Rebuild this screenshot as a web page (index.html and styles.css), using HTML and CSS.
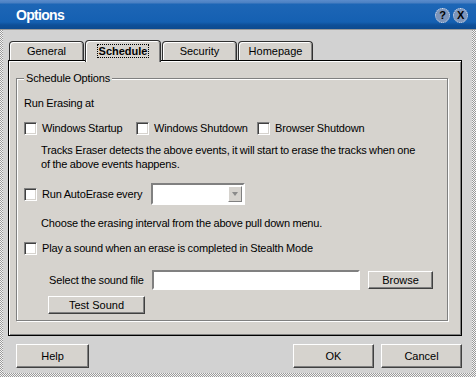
FILE: index.html
```html
<!DOCTYPE html>
<html lang="en">
<head>
    <meta charset="UTF-8">
    <title>Options</title>
    <link rel="stylesheet" href="styles.css">
</head>
<body>

    <div class="window">
        <!-- Title bar -->
        <div class="titlebar">
            <span class="title">Options</span>
            <span class="tb-buttons">
                <span class="tb-btn">?</span>
                <span class="tb-btn">X</span>
            </span>
        </div>

        <div class="dialog">
            <!-- Tabs -->
            <div class="tabs">
                <div class="tab">General</div>
                <div class="tab active"><span class="focus">Schedule</span></div>
                <div class="tab">Security</div>
                <div class="tab">Homepage</div>
            </div>

            <!-- Schedule page -->
            <div class="panel">
                <fieldset class="group">
                    <legend>Schedule Options</legend>

                    <div class="line first">Run Erasing at</div>

                    <div class="row checks">
                        <label class="check startup"><input type="checkbox"><span>Windows Startup</span></label>
                        <label class="check shutdown"><input type="checkbox"><span>Windows Shutdown</span></label>
                        <label class="check"><input type="checkbox"><span>Browser Shutdown</span></label>
                    </div>

                    <div class="desc">Tracks Eraser detects the above events, it will start to erase the tracks when one<br>of the above events happens.</div>

                    <div class="row auto">
                        <label class="check"><input type="checkbox"><span>Run AutoErase every</span></label>
                        <div class="combo"><span class="arrow"></span></div>
                    </div>

                    <div class="desc choose">Choose the erasing interval from the above pull down menu.</div>

                    <div class="row play">
                        <label class="check"><input type="checkbox"><span>Play a sound when an erase is completed in Stealth Mode</span></label>
                    </div>

                    <div class="row sound">
                        <span class="sound-label">Select the sound file</span>
                        <input type="text" class="field">
                        <button class="btn browse">Browse</button>
                    </div>

                    <button class="btn test">Test Sound</button>
                </fieldset>
            </div>

            <!-- Dialog buttons -->
            <div class="buttons">
                <button class="btn help">Help</button>
                <span class="spacer"></span>
                <button class="btn wide">OK</button>
                <button class="btn wide">Cancel</button>
            </div>
        </div>
    </div>

</body>
</html>
```

FILE: styles.css
```css
body {
    margin: 0;
    background-color: #2a6cc0;
    font-family: 'Liberation Sans', Arial, sans-serif;
    font-size: 11px;
    letter-spacing: -0.15px;
    word-spacing: -0.4px;
    color: #000;
}
.window {
    width: 476px;
    height: 377px;
    box-sizing: border-box;
    padding: 0 4px 4px 3px;
    background: repeating-conic-gradient(#f4f4f4 0 25%, #9a9a9a 0 50%) 0 0 / 2px 2px;
    display: flex;
    flex-direction: column;
}

/* Title bar */
.titlebar {
    flex-shrink: 0;
    height: 29px;
    margin: 0 -4px 0 -3px;
    padding: 0 8px 0 16px;
    display: flex;
    align-items: center;
    background: linear-gradient(#5a8ccc 0, #4a7fc2 3px, #1d66b6 4px, #1560b2 22px, #0e4f98 25px, #0c4a90 29px);
    border-bottom: 1px solid #9a9a9a;
}
.title {
    flex: 1;
    color: #fff;
    font-weight: bold;
    font-size: 14px;
    letter-spacing: -0.7px;
    padding-top: 1px;
}
.tb-buttons {
    display: flex;
    gap: 3px;
    padding-top: 1px;
}
.tb-btn {
    width: 13px;
    height: 13px;
    border-radius: 50%;
    border: 1px dotted #d8e4f4;
    background-color: #7d95bb;
    color: #000;
    font-weight: bold;
    font-size: 11px;
    line-height: 13px;
    text-align: center;
}

/* Dialog body */
.dialog {
    flex: 1;
    background-color: #d2d2d2;
    padding: 0 10px 0 5px;
    display: flex;
    flex-direction: column;
}
.tabs {
    flex-shrink: 0;
    display: flex;
    align-items: flex-end;
    gap: 1px;
    padding: 8px 0 0 1px;
    height: 22px;
    position: relative;
    z-index: 1;
}
.tab {
    width: 73px;
    height: 18px;
    border: 1px solid #303030;
    border-bottom: none;
    border-radius: 4px 4px 0 0;
    box-shadow: inset 1px 1px 0 #fff, inset -1px 0 0 #808080;
    background-color: #d6d3ce;
    text-align: center;
    line-height: 19px;
    letter-spacing: 0;
}
.tab.active {
    width: 74px;
    height: 21px;
    margin-bottom: -2px;
    font-weight: bold;
    line-height: 21px;
}
.focus {
    border: 1px dotted #000;
    padding: 0 1px;
}

.panel {
    flex-shrink: 0;
    height: 264px;
    border: 1px solid #000;
    box-shadow: inset 1px 1px 0 #fff, inset -1px -1px 0 #808080;
    background-color: #d6d3ce;
    padding: 10px 0 0 7px;
}

.group {
    width: 416px;
    margin: 0;
    padding: 0 7px 6px 7px;
    border: 1px solid #808080;
    box-shadow: inset 1px 1px 0 #fff, 1px 1px 0 #fff;
}
.group legend {
    padding: 0 2px;
    line-height: 14px;
    background-color: #d6d3ce;
}
.line, .desc {
    line-height: 14px;
}
.line.first {
    margin-top: 11px;
}
.desc {
    margin-top: 8px;
    padding-left: 17px;
}
.desc.choose {
    margin-top: 11px;
}

.row {
    display: flex;
    align-items: center;
    line-height: 14px;
}
.checks {
    margin-top: 11px;
}
.check.startup {
    width: 112px;
}
.check.shutdown {
    width: 121px;
}
.auto {
    margin-top: 12px;
    height: 22px;
    gap: 9px;
}
.play {
    margin-top: 11px;
}
.sound {
    margin-top: 15px;
    padding-left: 25px;
    gap: 8px;
}

.check {
    display: flex;
    align-items: center;
    gap: 5px;
}
.check input {
    flex-shrink: 0;
    appearance: none;
    margin: 0;
    width: 13px;
    height: 13px;
    background-color: #fff;
    border: 1px solid;
    border-color: #808080 #fff #fff #808080;
    box-shadow: inset 1px 1px 0 #404040, inset -1px -1px 0 #d6d3ce;
}

.combo {
    width: 90px;
    height: 18px;
    border: 2px solid;
    border-color: #808080 #fff #fff #808080;
    background-color: #fff;
    display: flex;
    justify-content: flex-end;
}
.arrow {
    width: 14px;
    height: 16px;
    margin: 1px;
    box-sizing: border-box;
    border: 1px solid;
    border-color: #fff #808080 #808080 #fff;
    background-color: #d6d3ce;
    position: relative;
}
.arrow::after {
    content: '';
    position: absolute;
    left: 3px;
    top: 5px;
    border: 3px solid transparent;
    border-top: 4px solid #8a8a8a;
    border-bottom: none;
}

.sound-label {
    width: 95px;
    white-space: nowrap;
}
.field {
    width: 204px;
    height: 16px;
    margin: 0;
    padding: 0;
    border: 2px solid;
    border-color: #808080 #fff #fff #808080;
    background-color: #fff;
}

.btn {
    font-family: 'Liberation Sans', Arial, sans-serif;
    font-size: 11px;
    letter-spacing: 0;
    color: #000;
    background-color: #d6d3ce;
    border: 1px solid;
    border-color: #fff #404040 #404040 #fff;
    box-shadow: inset -1px -1px 0 #808080;
    padding: 0;
}
.browse {
    width: 65px;
    height: 18px;
}
.test {
    display: block;
    width: 97px;
    height: 18px;
    margin: 6px 0 0 24px;
}

.buttons {
    flex-shrink: 0;
    display: flex;
    gap: 7px;
    margin-top: 8px;
    padding-left: 8px;
}
.spacer {
    flex: 1;
}
.btn.help {
    width: 73px;
    height: 24px;
}
.btn.wide {
    width: 81px;
    height: 24px;
}
```
